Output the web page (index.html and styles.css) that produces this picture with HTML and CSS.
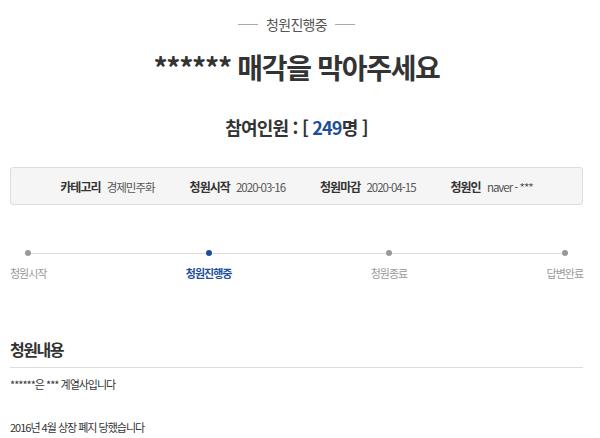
FILE: index.html
```html
<!DOCTYPE html>
<html lang="ko">
<head>
    <meta charset="UTF-8">
    <title>청원진행중</title>
    <link rel="stylesheet" href="styles.css">
</head>
<body>

<div class="petition">
    <!-- Header -->
    <div class="status"><span class="status-text">청원진행중</span></div>
    <h1 class="title">****** 매각을 막아주세요</h1>
    <p class="count">참여인원 : [ <span class="num">249</span>명 ]</p>

    <!-- Info box -->
    <ul class="info">
        <li><strong>카테고리</strong> 경제민주화</li>
        <li><strong>청원시작</strong> 2020-03-16</li>
        <li><strong>청원마감</strong> 2020-04-15</li>
        <li><strong>청원인</strong> naver - ***</li>
    </ul>

    <!-- Progress -->
    <ol class="steps">
        <li class="step"><span class="dot"></span>청원시작</li>
        <li class="step active"><span class="dot"></span>청원진행중</li>
        <li class="step"><span class="dot"></span>청원종료</li>
        <li class="step"><span class="dot"></span>답변완료</li>
    </ol>

    <!-- Content -->
    <h2 class="section-title">청원내용</h2>
    <div class="content">
        <p>******은 *** 계열사입니다</p>
        <p>2016년 4월 상장 폐지 당했습니다</p>
    </div>
</div>

</body>
</html>
```

FILE: styles.css
```css
body {
    margin: 0;
    font-family: "Noto Sans CJK KR", "Noto Sans", sans-serif;
    color: #333;
    background: #fff;
}
.petition {
    width: 573px;
    margin-left: 10px;
}
.status {
    display: flex;
    justify-content: center;
    margin-top: 14px;
}
.status-text {
    display: flex;
    align-items: center;
    gap: 8px;
    font-size: 14px;
    letter-spacing: -0.7px;
    color: #555;
    line-height: 20px;
}
.status-text::before, .status-text::after {
    content: "";
    width: 20px;
    height: 1px;
    background: #aaa;
}
.title {
    margin: 15px 0 0;
    text-align: center;
    font-size: 28px;
    letter-spacing: -1.3px;
    line-height: 36px;
    font-weight: bold;
    color: #333;
}
.count {
    margin: 29px 0 0;
    text-align: center;
    font-size: 18px;
    letter-spacing: -0.8px;
    line-height: 26px;
    font-weight: bold;
}
.count .num {
    color: #1d4f9c;
}
.info {
    list-style: none;
    margin: 27px 0 0;
    padding: 0;
    height: 36px;
    display: flex;
    justify-content: center;
    align-items: center;
    gap: 35px;
    background: #f5f5f5;
    border: 1px solid #ddd;
    border-radius: 3px;
    font-size: 11.5px;
    letter-spacing: -1px;
    color: #555;
}
.info strong {
    font-size: 12px;
    color: #333;
    margin-right: 4px;
}
.steps {
    list-style: none;
    margin: 45px 0 0;
    padding: 0;
    display: flex;
    justify-content: space-between;
    position: relative;
}
.steps::before {
    content: "";
    position: absolute;
    left: 18px;
    right: 18px;
    top: 3px;
    height: 1px;
    background: #ddd;
}
.step {
    display: flex;
    flex-direction: column;
    align-items: center;
    gap: 9px;
    font-size: 11px;
    letter-spacing: -1px;
    line-height: 16px;
    color: #999;
    position: relative;
}
.dot {
    width: 6px;
    height: 6px;
    border-radius: 50%;
    background: #999;
}
.step.active {
    color: #1d4f9c;
    font-weight: bold;
}
.step.active .dot {
    background: #1d4f9c;
}
.section-title {
    margin: 57px 0 0;
    font-size: 16px;
    letter-spacing: -1.5px;
    line-height: 22px;
    font-weight: bold;
    padding-bottom: 7px;
    border-bottom: 1px solid #ddd;
}
.content {
    font-size: 11px;
    letter-spacing: -1px;
    color: #333;
}
.content p {
    margin: 8px 0 0;
    line-height: 16px;
}
.content p + p {
    margin-top: 27px;
}
```
